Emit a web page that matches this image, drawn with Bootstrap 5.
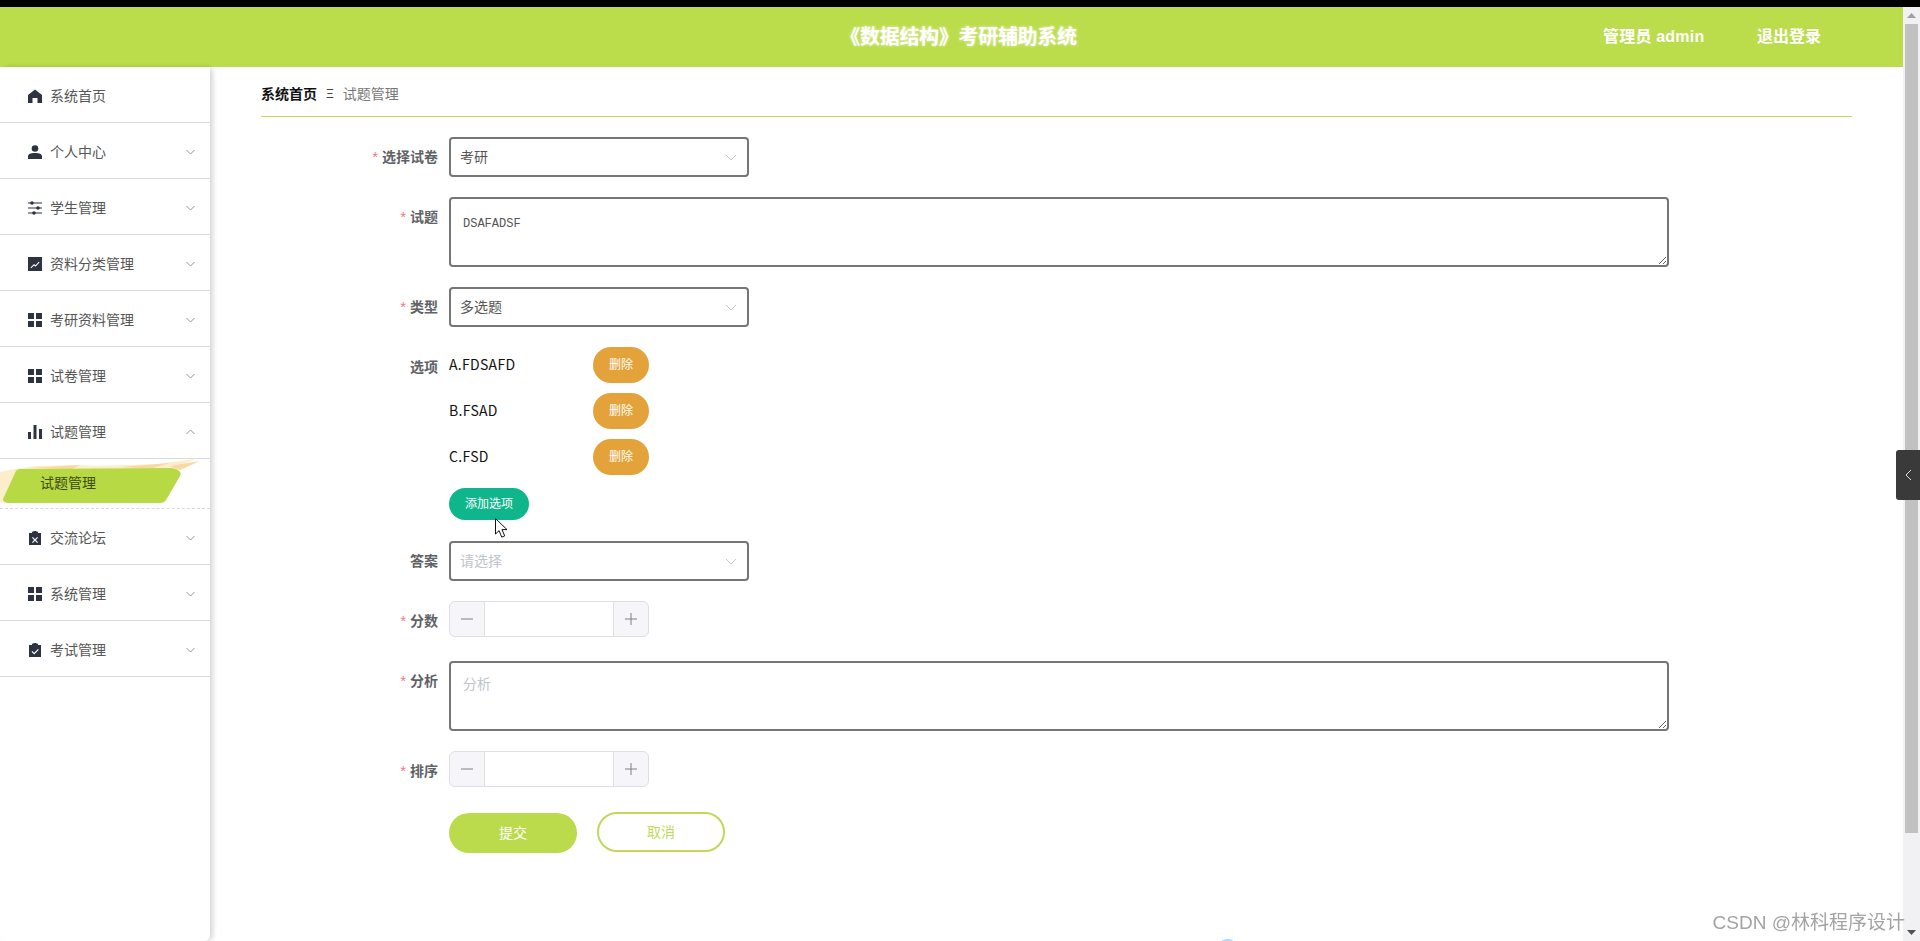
<!DOCTYPE html>
<html lang="zh-CN">
<head>
  <meta charset="UTF-8" />
  <meta name="viewport" content="width=device-width, initial-scale=1.0" />
  <title>《数据结构》考研辅助系统</title>
  <link href="https://cdn.jsdelivr.net/npm/bootstrap@5.3.0/dist/css/bootstrap.min.css" rel="stylesheet" />
  <style>
    html, body { height: 100%; }
    body {
      overflow: hidden;
      background: #fff;
      font-family: "Liberation Sans", "Noto Sans CJK SC", sans-serif;
      font-size: 14px;
      color: #333;
    }
    .top-black { height: 7px; background: #000; }
    .page-wrap { height: 934px; }
    .page-main { width: 1903px; }

    /* header */
    .top-head { height: 60px; background: #bbdd4b; color: #fff; }
    .head-title { left: 14px; right: 0; font-size: 20px; font-weight: 700; letter-spacing: -.3px; text-shadow: 0 0 3px rgba(255,255,255,.7); }
    .head-user { margin-left: 1603px; font-size: 16px; font-weight: 700; width: 108px; white-space: nowrap; letter-spacing: .2px; }
    .head-out { margin-left: 46px; font-size: 16px; font-weight: 700; white-space: nowrap; }

    /* sidebar */
    .side-box { width: 210px; height: 874px; background: #fff; box-shadow: 3px 0 5px rgba(0,0,0,.16); z-index: 2; }
    .side-item {
      height: 56px;
      padding: 3px 15px 0 28px;
      border: 0;
      border-bottom: 1px solid #d9dadd;
      border-radius: 0 !important;
      color: #555;
      gap: 8px;
    }
    .side-item svg.ico { width: 14px; height: 14px; fill: #2d3340; flex: none; }
    .side-item .arrow { width: 9px; height: 6px; margin-left: auto; stroke: #999; fill: none; flex: none; }
    .side-sub {
      height: 50px;
      border: 0;
      border-bottom: 1px dashed #d9dadd;
      border-radius: 0 !important;
      padding: 0 0 0 40px;
      color: #3d4a14;
    }
    .side-brush { left: 0; top: 0; width: 210px; height: 50px; }

    /* content */
    .form-area { padding-left: 51px; width: 1693px; }
    .crumb-bar { height: 50px; width: 1591px; border-bottom: 1px solid #cdd465; padding-top: 5px; }
    .crumb-bar .breadcrumb { --bs-breadcrumb-margin-bottom: 0; --bs-breadcrumb-item-padding-x: 9px; }
    .crumb-bar .breadcrumb-item + .breadcrumb-item::before { content: "Ξ"; color: #444; font-size: 12px; line-height: 20px; }
    .crumb-first { color: #111; font-weight: 700; }
    .crumb-last { color: #777; }

    .form-fields { margin-top: 20px; }
    .field-row { display: flex; margin-bottom: 20px; }
    .field-opts { margin-bottom: 21px; }
    .form-actions { margin-left: 188px; }
    .field-label {
      width: 177px;
      margin-right: 11px;
      text-align: right;
      color: #606266;
      font-weight: 700;
      font-size: 14px;
      line-height: 40px;
      flex: none;
    }
    .field-label i { font-style: normal; font-weight: 400; font-size: 15px; color: #ee7c8a; margin-right: 4px; }
    .pick-box, .pick-box:focus {
      width: 300px;
      height: 40px;
      border: 2px solid #767676;
      border-radius: 4px;
      padding: 0 30px 0 9px;
      font-size: 14px;
      color: #555;
      box-shadow: none;
      background-image: url("data:image/svg+xml,%3csvg xmlns='http://www.w3.org/2000/svg' viewBox='0 0 12 7'%3e%3cpath fill='none' stroke='%23c4c6cc' d='M1 1l5 5 5-5'/%3e%3c/svg%3e");
      background-position: right 10px center;
      background-size: 12px 7px;
    }
    .pick-empty { color: #c0c4cc; }
    .text-box, .text-box:focus {
      width: 1220px;
      height: 70px;
      border: 2px solid #767676;
      border-radius: 4px;
      padding: 12px;
      box-shadow: none;
      font-size: 14px;
      line-height: 1.4;
    }
    .text-mono, .text-mono:focus { font-family: "Liberation Mono", monospace; font-size: 12px; color: #555; padding-top: 17px; }
    .text-box::placeholder { color: #c0c4cc; }

    .opt-row { display: flex; align-items: center; height: 36px; margin-bottom: 10px; color: #111; }
    .opt-name { width: 144px; font-family: "Noto Sans CJK SC", sans-serif; font-weight: 400; letter-spacing: .3px; position: relative; top: -1px; }
    .opt-del, .opt-del:hover {
      width: 56px; height: 36px; padding: 0;
      background: #e4a23b; border: 0; color: #fff; font-size: 12px;
    }
    .opt-add, .opt-add:hover {
      width: 80px; height: 32px; padding: 0; margin-top: 13px; display: block;
      background: #10b68b; border: 0; color: #fff; font-size: 12px;
    }

    .num-group { width: 200px; height: 36px; margin-bottom: 4px; }
    .num-group .btn {
      width: 36px; padding: 0;
      background: #f5f5fa; border: 1px solid #dcdfe6;
      display: flex; align-items: center; justify-content: center;
    }
    .num-group .btn svg { width: 12px; height: 12px; stroke: #808080; fill: none; }
    .num-group .form-control { border: 1px solid #dcdfe6; box-shadow: none; height: 36px; }

    .act-save, .act-save:hover {
      width: 128px; height: 40px; padding: 0; margin-top: 2px;
      background: #bbdb4c; border: 0; color: #fff; font-size: 14px;
    }
    .act-cancel, .act-cancel:hover {
      width: 128px; height: 40px; padding: 0 0 0; margin-left: 20px; margin-top: 1px;
      background: #fff; border: 2px solid #c0d95a; color: #c0d95a; font-size: 14px;
    }

    /* scrollbar drawn by hand, the window's own is hidden */
    .bar-right { width: 17px; height: 934px; background: #f1f1f3; }
    .bar-arrow { height: 17px; }
    .bar-thumb { width: 13px; height: 809px; margin: 0 auto; background: #c1c1c1; }

    .side-tab {
      right: 0; top: 450px; width: 24px; height: 50px;
      background: #3a3a3a; border-radius: 3px 0 0 3px; z-index: 5;
    }
    .mark-csdn { right: 15px; top: 909px; font-size: 19px; color: #a3a3a3; z-index: 5; white-space: nowrap; }
    .mouse-arrow { left: 495px; top: 518px; width: 14px; height: 21px; z-index: 6; }
    .blue-blip { left: 1222px; top: 939px; width: 11px; height: 4px; background: #a9d8ff; border-radius: 50%; z-index: 5; }
  </style>
</head>
<body>
  <div class="top-black"></div>
  <div class="page-wrap d-flex">
    <div class="page-main d-flex flex-column">

      <!-- Header -->
      <div class="top-head d-flex align-items-center position-relative">
        <div class="head-title position-absolute text-center">《数据结构》考研辅助系统</div>
        <div class="head-user">管理员 admin</div>
        <div class="head-out">退出登录</div>
      </div>

      <div class="d-flex flex-grow-1">
        <!-- Sidebar -->
        <div class="side-box list-group flex-shrink-0">
          <a class="list-group-item side-item d-flex align-items-center">
            <svg class="ico" viewBox="0 0 14 14"><path d="M7 .5L14 6v8H9.500V9h-5v5H0V6z"/></svg>
            <span>系统首页</span>
          </a>
          <a class="list-group-item side-item d-flex align-items-center">
            <svg class="ico" viewBox="0 0 14 14"><circle cx="7" cy="3.500" r="3.300"/><path d="M0 14v-2.500C0 9 2.500 8 7 8s7 1 7 3.500V14z"/></svg>
            <span>个人中心</span>
            <svg class="arrow" viewBox="0 0 9 6"><path d="M.5 1l4 4 4-4"/></svg>
          </a>
          <a class="list-group-item side-item d-flex align-items-center">
            <svg class="ico" viewBox="0 0 14 14"><path d="M0 1.500h14v1H0zM0 6.500h14v1H0zM0 11.500h14v1H0z"/><circle cx="4" cy="2" r="1.800"/><circle cx="10" cy="7" r="1.800"/><circle cx="6" cy="12" r="1.800"/></svg>
            <span>学生管理</span>
            <svg class="arrow" viewBox="0 0 9 6"><path d="M.5 1l4 4 4-4"/></svg>
          </a>
          <a class="list-group-item side-item d-flex align-items-center">
            <svg class="ico" viewBox="0 0 14 14"><path fill-rule="evenodd" d="M0 0h14v14H0zM2.500 10.500l.7.7 2.800-2.700 1.500 1.300 4-4.300-.7-.7-3.300 3.500-1.500-1.300z"/></svg>
            <span>资料分类管理</span>
            <svg class="arrow" viewBox="0 0 9 6"><path d="M.5 1l4 4 4-4"/></svg>
          </a>
          <a class="list-group-item side-item d-flex align-items-center">
            <svg class="ico" viewBox="0 0 14 14"><path d="M0 0h6v6H0zM8 0h6v6H8zM0 8h6v6H0zM8 8h6v6H8z"/></svg>
            <span>考研资料管理</span>
            <svg class="arrow" viewBox="0 0 9 6"><path d="M.5 1l4 4 4-4"/></svg>
          </a>
          <a class="list-group-item side-item d-flex align-items-center">
            <svg class="ico" viewBox="0 0 14 14"><path d="M0 0h6v6H0zM8 0h6v6H8zM0 8h6v6H0zM8 8h6v6H8z"/></svg>
            <span>试卷管理</span>
            <svg class="arrow" viewBox="0 0 9 6"><path d="M.5 1l4 4 4-4"/></svg>
          </a>
          <a class="list-group-item side-item d-flex align-items-center">
            <svg class="ico" viewBox="0 0 14 14"><path d="M0 7h3v7H0zM5.500 0h3v14h-3zM11 4h3v10h-3z"/></svg>
            <span>试题管理</span>
            <svg class="arrow" viewBox="0 0 9 6"><path d="M.5 5l4-4 4 4"/></svg>
          </a>
          <a class="list-group-item side-sub d-flex align-items-center position-relative">
            <svg class="side-brush position-absolute" viewBox="0 0 210 50">
              <path fill="#fdeecb" d="M14 10l22-3 40-1 20 1 62-2 37-5-20 9 5 0-13 8 5 0-11 9-8 14-6 3-140 1-22-2 8-6 2-22z"/>
              <path fill="#f9d8a4" d="M30 9l50-3-8 4zM120 8l50-4-20 6zM170 7l30-5-20 9z"/>
              <path fill="#b7d944" d="M20 10l151-1c8 1 11 4 9 8l-14 24c-2 3-5 3-8 3L8 44c-5-1-6-3-4-6l11-24c1-3 3-4 5-4z"/>
            </svg>
            <span class="position-relative">试题管理</span>
          </a>
          <a class="list-group-item side-item d-flex align-items-center">
            <svg class="ico" viewBox="0 0 14 14"><path fill-rule="evenodd" d="M1 2h3V.8h1.500V0h3v.8H10V2h3v12H1zM4.800 6l-.8.8L6.200 9 4 11.200l.8.800L7 9.800 9.200 12l.8-.8L7.800 9 10 6.800 9.200 6 7 8.200z"/></svg>
            <span>交流论坛</span>
            <svg class="arrow" viewBox="0 0 9 6"><path d="M.5 1l4 4 4-4"/></svg>
          </a>
          <a class="list-group-item side-item d-flex align-items-center">
            <svg class="ico" viewBox="0 0 14 14"><path d="M0 0h6v6H0zM8 0h6v6H8zM0 8h6v6H0zM8 8h6v6H8z"/></svg>
            <span>系统管理</span>
            <svg class="arrow" viewBox="0 0 9 6"><path d="M.5 1l4 4 4-4"/></svg>
          </a>
          <a class="list-group-item side-item d-flex align-items-center">
            <svg class="ico" viewBox="0 0 14 14"><path fill-rule="evenodd" d="M1 2h3V.8h1.500V0h3v.8H10V2h3v12H1zM10 6L6.200 9.800 4.300 8l-.8.800 2.700 2.700L10.800 6.800z"/></svg>
            <span>考试管理</span>
            <svg class="arrow" viewBox="0 0 9 6"><path d="M.5 1l4 4 4-4"/></svg>
          </a>
        </div>

        <!-- Form -->
        <div class="form-area">
          <div class="crumb-bar d-flex align-items-center">
            <ol class="breadcrumb">
              <li class="breadcrumb-item crumb-first">系统首页</li>
              <li class="breadcrumb-item crumb-last">试题管理</li>
            </ol>
          </div>

          <form class="form-fields">
            <div class="field-row">
              <label class="field-label"><i>*</i>选择试卷</label>
              <select class="form-select pick-box"><option>考研</option></select>
            </div>
            <div class="field-row">
              <label class="field-label"><i>*</i>试题</label>
              <textarea class="form-control text-box text-mono">DSAFADSF</textarea>
            </div>
            <div class="field-row">
              <label class="field-label"><i>*</i>类型</label>
              <select class="form-select pick-box"><option>多选题</option></select>
            </div>
            <div class="field-row field-opts">
              <label class="field-label">选项</label>
              <div>
                <div class="opt-row"><span class="opt-name">A.FDSAFD</span><button type="button" class="btn rounded-pill opt-del">删除</button></div>
                <div class="opt-row"><span class="opt-name">B.FSAD</span><button type="button" class="btn rounded-pill opt-del">删除</button></div>
                <div class="opt-row"><span class="opt-name">C.FSD</span><button type="button" class="btn rounded-pill opt-del">删除</button></div>
                <button type="button" class="btn rounded-pill opt-add">添加选项</button>
              </div>
            </div>
            <div class="field-row">
              <label class="field-label">答案</label>
              <select class="form-select pick-box pick-empty"><option>请选择</option></select>
            </div>
            <div class="field-row">
              <label class="field-label"><i>*</i>分数</label>
              <div class="input-group num-group">
                <button type="button" class="btn"><svg viewBox="0 0 12 12"><path d="M0 6h12"/></svg></button>
                <input type="text" class="form-control">
                <button type="button" class="btn"><svg viewBox="0 0 12 12"><path d="M0 6h12M6 0v12"/></svg></button>
              </div>
            </div>
            <div class="field-row">
              <label class="field-label"><i>*</i>分析</label>
              <textarea class="form-control text-box" placeholder="分析"></textarea>
            </div>
            <div class="field-row">
              <label class="field-label"><i>*</i>排序</label>
              <div class="input-group num-group">
                <button type="button" class="btn"><svg viewBox="0 0 12 12"><path d="M0 6h12"/></svg></button>
                <input type="text" class="form-control">
                <button type="button" class="btn"><svg viewBox="0 0 12 12"><path d="M0 6h12M6 0v12"/></svg></button>
              </div>
            </div>
            <div class="d-flex form-actions">
              <button type="button" class="btn rounded-pill act-save">提交</button>
              <button type="button" class="btn rounded-pill act-cancel">取消</button>
            </div>
          </form>
        </div>
      </div>
    </div>

    <!-- Scrollbar -->
    <div class="bar-right d-flex flex-column">
      <div class="bar-arrow d-flex align-items-center justify-content-center">
        <svg width="9" height="5" viewBox="0 0 9 5"><path fill="#a0a0a0" d="M4.500 0L9 5H0z"/></svg>
      </div>
      <div class="bar-thumb"></div>
      <div class="bar-arrow mt-auto d-flex align-items-center justify-content-center">
        <svg width="9" height="5" viewBox="0 0 9 5"><path fill="#505050" d="M0 0h9L4.500 5z"/></svg>
      </div>
    </div>
  </div>

  <!-- Things lying over the page -->
  <div class="side-tab position-fixed d-flex align-items-center justify-content-center">
    <svg width="7" height="12" viewBox="0 0 7 12"><path fill="none" stroke="#ddd" d="M6 1L1 6l5 5"/></svg>
  </div>
  <svg class="mouse-arrow position-fixed" viewBox="0 0 14 21"><path fill="#fff" stroke="#111" stroke-width="1" d="M.5.500v15.500l3.600-3.400 2.600 6.500 3-1.200-2.700-6.300h5z"/></svg>
  <div class="mark-csdn position-fixed">CSDN @林科程序设计</div>
  <div class="blue-blip position-fixed"></div>

  <script src="https://cdn.jsdelivr.net/npm/bootstrap@5.3.0/dist/js/bootstrap.bundle.min.js"></script>
</body>
</html>
